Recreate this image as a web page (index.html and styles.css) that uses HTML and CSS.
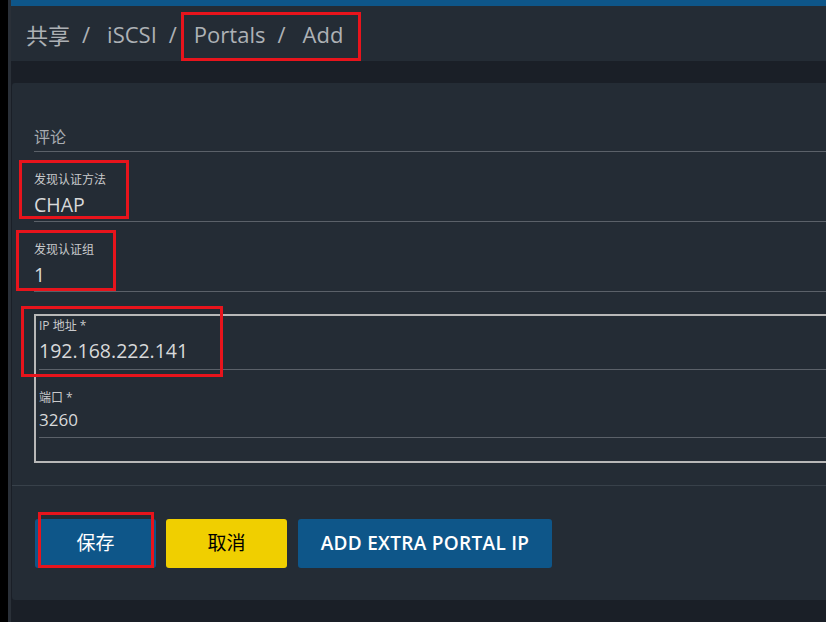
FILE: index.html
```html
<!DOCTYPE html>
<html lang="zh">

<head>
    <meta charset="UTF-8">
    <meta name="viewport" content="width=device-width, initial-scale=1.0">
    <title>Portals / Add</title>
    <link rel="stylesheet" href="styles.css">
</head>

<body>
    <div class="edge"></div>
    <div class="main">
        <div class="topbar"></div>
        <div class="header">
            <span class="crumb">共享</span>
            <span class="sep">/</span>
            <span class="crumb">iSCSI</span>
            <span class="sep">/</span>
            <span class="crumb">Portals</span>
            <span class="sep">/</span>
            <span class="crumb">Add</span>
        </div>
        <div class="content">
            <div class="card">
                <div class="form">
                    <div class="field field-comment">
                        <div class="placeholder">评论</div>
                    </div>
                    <div class="field">
                        <div class="field-label">发现认证方法</div>
                        <div class="field-value">CHAP</div>
                    </div>
                    <div class="field">
                        <div class="field-label">发现认证组</div>
                        <div class="field-value">1</div>
                    </div>
                    <fieldset class="portal">
                        <div class="field field-ip">
                            <div class="field-label">IP 地址 *</div>
                            <div class="field-value big">192.168.222.141</div>
                        </div>
                        <div class="field field-port">
                            <div class="field-label">端口 *</div>
                            <div class="field-value">3260</div>
                        </div>
                    </fieldset>
                </div>
                <div class="actions">
                    <a href="javascript:;" class="btn btn-primary btn-short">保存</a>
                    <a href="javascript:;" class="btn btn-warn btn-short">取消</a>
                    <a href="javascript:;" class="btn btn-primary btn-wide">ADD EXTRA PORTAL IP</a>
                </div>
            </div>
        </div>
    </div>

    <!-- 标注框 -->
    <div class="mark mark-crumb"></div>
    <div class="mark mark-method"></div>
    <div class="mark mark-group"></div>
    <div class="mark mark-ip"></div>
    <div class="mark mark-save"></div>
</body>

</html>
```

FILE: styles.css
```css
* {
    margin: 0;
    padding: 0;
    box-sizing: border-box;
}

a {
    text-decoration: none;
}

body {
    width: 826px;
    height: 622px;
    overflow: hidden;
    display: flex;
    background-color: #1a1f27;
    font-family: "Open Sans", "Noto Sans CJK SC", sans-serif;
    position: relative;
}

.edge {
    width: 11px;
    background-color: #000;
    border-right: 3px solid #2a3038;
    flex-shrink: 0;
}

.main {
    flex: 1;
    min-width: 0;
}

.topbar {
    height: 6px;
    background-color: #0e5689;
}

.header {
    height: 55px;
    background-color: #242c35;
    display: flex;
    align-items: center;
    padding-left: 15px;
    font-size: 22px;
    color: #adb1b5;
}

.header .sep {
    margin: 0 17px 0 12px;
}

.content {
    padding: 22px 0 0 1px;
}

.card {
    height: 517px;
    background-color: #242c35;
    border-radius: 3px 0 0 3px;
    margin-right: -20px;
}

.form {
    padding: 24px 0 22px 22px;
}

.field {
    padding: 20px 0 4px;
    border-bottom: 1px solid #5b6169;
}

.field-comment {
    height: 45px;
}

.placeholder {
    font-size: 16px;
    line-height: 20px;
    color: #a9adb2;
}

.field-label {
    font-size: 12px;
    line-height: 16px;
    color: #c9cacc;
}

.field-value {
    font-size: 19.5px;
    line-height: 24px;
    margin-top: 5px;
    color: #d8d9da;
}

.field-value.big {
    font-size: 19.5px;
    line-height: 26px;
    margin-top: 4px;
}

.portal {
    margin-top: 22px;
    border: 2px solid #b8b8b8;
    border-right: none;
    padding: 1px 0 23px 3px;
    min-width: 0;
}

.field-ip {
    padding: 1px 0 5px;
}

.field-port {
    padding: 20px 0 5px;
}

.field-port .field-value {
    margin-top: 2px;
    font-size: 17px;
}

.actions {
    border-top: 1px solid #38414a;
    padding: 33px 0 0 23px;
    display: flex;
    gap: 10px;
}

.btn {
    height: 49px;
    line-height: 49px;
    text-align: center;
    font-size: 19px;
    border-radius: 3px;
    color: #fff;
}

.btn-short {
    width: 121px;
}

.btn-wide {
    width: 254px;
    margin-left: 1px;
    font-weight: 600;
    letter-spacing: 0.3px;
}

.btn-primary {
    background-color: #0e5689;
}

.btn-warn {
    background-color: #f0cf00;
    color: #000;
}

.mark {
    position: absolute;
    border: 3px solid #e8141c;
}

.mark-crumb {
    left: 181px;
    top: 12px;
    width: 180px;
    height: 49px;
}

.mark-method {
    left: 19px;
    top: 160px;
    width: 110px;
    height: 59px;
}

.mark-group {
    left: 16px;
    top: 230px;
    width: 100px;
    height: 61px;
}

.mark-ip {
    left: 21px;
    top: 306px;
    width: 202px;
    height: 71px;
}

.mark-save {
    left: 38px;
    top: 512px;
    width: 116px;
    height: 56px;
}
```
